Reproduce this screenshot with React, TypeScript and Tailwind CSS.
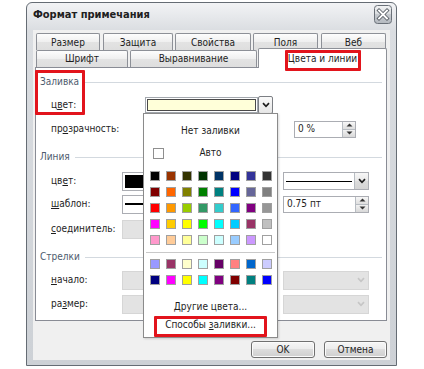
import React from "react";

const swatchesMain = [
  "bg-[#000000]", "bg-[#993300]", "bg-[#333300]", "bg-[#003300]", "bg-[#003366]", "bg-[#000080]", "bg-[#333399]", "bg-[#333333]",
  "bg-[#800000]", "bg-[#ff6600]", "bg-[#808000]", "bg-[#008000]", "bg-[#008080]", "bg-[#0000ff]", "bg-[#666699]", "bg-[#808080]",
  "bg-[#ff0000]", "bg-[#ff9900]", "bg-[#99cc00]", "bg-[#339966]", "bg-[#33cccc]", "bg-[#3366ff]", "bg-[#800080]", "bg-[#969696]",
  "bg-[#ff00ff]", "bg-[#ffcc00]", "bg-[#ffff00]", "bg-[#00ff00]", "bg-[#00ffff]", "bg-[#00ccff]", "bg-[#993366]", "bg-[#c0c0c0]",
  "bg-[#ff99cc]", "bg-[#ffcc99]", "bg-[#ffff99]", "bg-[#ccffcc]", "bg-[#ccffff]", "bg-[#99ccff]", "bg-[#cc99ff]", "bg-[#ffffff]",
];
const swatchesExtra = [
  "bg-[#9999ff]", "bg-[#993366]", "bg-[#ffffcc]", "bg-[#ccffff]", "bg-[#660066]", "bg-[#ff8080]", "bg-[#0066cc]", "bg-[#ccccff]",
  "bg-[#000080]", "bg-[#ff00ff]", "bg-[#ffff00]", "bg-[#00ffff]", "bg-[#800080]", "bg-[#800000]", "bg-[#008080]", "bg-[#0000ff]",
];

function Chevron({ disabled }: { disabled?: boolean }) {
  return (
    <svg width="8" height="6" viewBox="0 0 8 6">
      <path d="M1 1.2 L4 4.3 L7 1.2" fill="none" stroke={disabled ? "#c6c6c6" : "#1e1e1e"} strokeWidth="1.7" />
    </svg>
  );
}

function DropBtn({ disabled }: { disabled?: boolean }) {
  return (
    <div
      className={
        disabled
          ? "w-[14px] h-full flex items-center justify-center"
          : "w-[14px] h-full flex items-center justify-center border-l border-[#b7bcc2] bg-[linear-gradient(to_bottom,#f7f7f7,#e8e8e8_50%,#dcdcdc_50%,#d4d4d4)]"
      }
    >
      <Chevron disabled={disabled} />
    </div>
  );
}

function SpinBtns() {
  return (
    <div className="w-[13px] h-full flex flex-col border-l border-[#b7bcc2]">
      <div className="flex-1 flex items-center justify-center bg-[linear-gradient(to_bottom,#f7f7f7,#dedede)] border-b border-[#b7bcc2]">
        <svg width="7" height="4" viewBox="0 0 7 4"><path d="M0.5 3.5 L3.5 0.5 L6.5 3.5 Z" fill="#333" /></svg>
      </div>
      <div className="flex-1 flex items-center justify-center bg-[linear-gradient(to_bottom,#f2f2f2,#d8d8d8)]">
        <svg width="7" height="4" viewBox="0 0 7 4"><path d="M0.5 0.5 L3.5 3.5 L6.5 0.5 Z" fill="#333" /></svg>
      </div>
    </div>
  );
}

function GroupHeader({ title }: { title: string }) {
  return (
    <div className="flex items-center h-[14px] pl-[4px] pr-[4px]">
      <span className="text-[#4e5b6e]">{title}</span>
      <div className="flex-1 h-px bg-[#d3d9df] ml-[5px]" />
    </div>
  );
}

function Tab({ label, className }: { label: string; className: string }) {
  return (
    <div
      className={
        "h-full flex justify-center pt-[3px] border border-b-0 border-[#8d9097] rounded-t-[2px] bg-[linear-gradient(to_bottom,#fdfdfd,#efefef_50%,#e3e3e3_50%,#dedede)] " +
        className
      }
    >
      {label}
    </div>
  );
}

function Button({ label, className }: { label: string; className: string }) {
  return (
    <div
      className={
        "h-[17px] flex items-center justify-center border border-[#707070] rounded-[3px] bg-[linear-gradient(to_bottom,#f6f6f6,#ebebeb_50%,#dddddd_50%,#cfcfcf)] shadow-[inset_0_0_0_1px_#fbfbfb] " +
        className
      }
    >
      {label}
    </div>
  );
}

function CloseBtn() {
  return (
    <svg width="18" height="19" viewBox="0 0 18 19">
      <defs>
        <linearGradient id="cb" x1="0" y1="0" x2="0" y2="1">
          <stop offset="0" stopColor="#f3f4f5" />
          <stop offset="0.5" stopColor="#d9dcdf" />
          <stop offset="0.5" stopColor="#c6cacf" />
          <stop offset="1" stopColor="#b4b9bf" />
        </linearGradient>
      </defs>
      <rect x="0.5" y="0.5" width="17" height="18" rx="3" fill="url(#cb)" stroke="#6a7078" />
      <path d="M5 5.5 L13 13.5 M13 5.5 L5 13.5" stroke="#5b6168" strokeWidth="3.6" strokeLinecap="square" />
      <path d="M5 5.5 L13 13.5 M13 5.5 L5 13.5" stroke="#ffffff" strokeWidth="1.8" strokeLinecap="square" />
    </svg>
  );
}

function Popup() {
  return (
    <div className="absolute left-[143px] top-[113px] w-[135px] h-[225px] bg-white border border-[#8b8b8b] flex flex-col shadow-[1px_1px_2px_rgba(0,0,0,0.15)]">
      <div className="mt-[8px] h-[18px] flex items-center justify-center">Нет заливки</div>
      <div className="mt-[6px] h-[14px] grid grid-cols-[1fr_auto_1fr] items-center">
        <div className="ml-[9px] w-[11px] h-[11px] border border-[#8f8f8f] bg-white" />
        <span>Авто</span>
        <span />
      </div>
      <div className="mt-[11px] pl-[6px] grid grid-cols-[repeat(8,10px)] gap-[6px]">
        {swatchesMain.map((c, i) => (
          <div key={i} className={"w-[10px] h-[10px] border border-[#a0a0a0] " + c} />
        ))}
      </div>
      <div className="mt-[7px] mx-[2px] h-px bg-[#c9c9c9]" />
      <div className="mt-[6px] pl-[6px] grid grid-cols-[repeat(8,10px)] gap-[6px]">
        {swatchesExtra.map((c, i) => (
          <div key={i} className={"w-[10px] h-[10px] border border-[#a0a0a0] " + c} />
        ))}
      </div>
      <div className="mt-[14px] h-[16px] flex items-center justify-center">
        <span><u>Д</u>ругие цвета...</span>
      </div>
      <div className="mt-[2px] h-[16px] flex items-center justify-center">
        <span>Способы <u>з</u>аливки...</span>
      </div>
    </div>
  );
}

function Panel() {
  return (
    <div className="w-[352px] h-[254px] border border-[#898c95] bg-white flex flex-col pt-[7px]">
      <GroupHeader title="Заливка" />
      {/* fill color */}
      <div className="mt-[7px] h-[18px] flex items-center pl-[15px]">
        <span className="w-[94px]">ц<u>в</u>ет:</span>
        <div className="w-[128px] h-[17px] flex items-center">
          <div className="flex-1 h-[16px] border border-[#a3a8ae] bg-white p-[1px]">
            <div className="w-full h-full bg-[#ffffd9] border border-[#4a4a4a]" />
          </div>
          <div className="w-[15px] h-[18px] border border-[#7c7f84] rounded-[2px] flex items-center justify-center bg-[linear-gradient(to_bottom,#fafafa,#e6e6e6)]">
            <Chevron />
          </div>
        </div>
      </div>
      {/* transparency */}
      <div className="mt-[6px] h-[18px] flex items-center pl-[15px]">
        <span className="w-[243px]">пр<u>о</u>зрачность:</span>
        <div className="w-[62px] h-[17px] flex border border-[#abadb3] bg-white">
          <span className="flex-1 pl-[3px] flex items-center">0 %</span>
          <SpinBtns />
        </div>
      </div>
      <div className="mt-[12px]">
        <GroupHeader title="Линия" />
      </div>
      {/* line color */}
      <div className="mt-[8px] h-[18px] flex items-center pl-[15px]">
        <span className="w-[71px]">цв<u>е</u>т:</span>
        <div className="w-[122px] h-[19px] border border-[#abadb3] bg-white p-[2px]">
          <div className="w-full h-full bg-black" />
        </div>
        <div className="ml-[39px] w-[86px] h-[18px] flex border border-[#abadb3] bg-white">
          <div className="flex-1 flex items-center pl-[2px] pr-[2px]">
            <div className="w-full h-px bg-black" />
          </div>
          <DropBtn />
        </div>
      </div>
      {/* pattern */}
      <div className="mt-[5px] h-[18px] flex items-center pl-[15px]">
        <span className="w-[71px]"><u>ш</u>аблон:</span>
        <div className="w-[122px] h-[19px] border border-[#abadb3] bg-white flex items-center pl-[2px]">
          <div className="w-full h-[2px] bg-black" />
        </div>
        <div className="ml-[39px] w-[86px] h-[17px] flex border border-[#abadb3] bg-white">
          <span className="flex-1 pl-[3px] flex items-center">0.75 пт</span>
          <SpinBtns />
        </div>
      </div>
      {/* connector */}
      <div className="mt-[7px] h-[18px] flex items-center pl-[15px]">
        <span className="w-[71px]"><u>с</u>оединитель:</span>
        <div className="w-[122px] h-[19px] border border-[#d6d6d6] bg-[#e3e3e3]" />
      </div>
      <div className="mt-[12px]">
        <GroupHeader title="Стрелки" />
      </div>
      {/* begin */}
      <div className="mt-[7px] h-[18px] flex items-center pl-[15px]">
        <span className="w-[71px]"><u>н</u>ачало:</span>
        <div className="w-[122px] h-[19px] border border-[#d6d6d6] bg-[#e3e3e3]" />
        <div className="ml-[39px] w-[86px] h-[19px] flex justify-end border border-[#d6d6d6] bg-[#e3e3e3]">
          <DropBtn disabled />
        </div>
      </div>
      {/* size */}
      <div className="mt-[6px] h-[18px] flex items-center pl-[15px]">
        <span className="w-[71px]">ра<u>з</u>мер:</span>
        <div className="w-[122px] h-[19px] border border-[#d6d6d6] bg-[#e3e3e3]" />
        <div className="ml-[39px] w-[86px] h-[19px] flex justify-end border border-[#d6d6d6] bg-[#e3e3e3]">
          <DropBtn disabled />
        </div>
      </div>
    </div>
  );
}

function Dialog() {
  return (
    <div className="w-[371px] h-[364px] flex flex-col rounded-t-[6px] border border-[#656c74] bg-[linear-gradient(to_bottom,#f2f3f5,#dadde1_28px,#cdd1d6)]">
      <div className="h-[27px] flex items-start pl-[6px] pr-[4px]">
        <div className="h-[23px] flex items-center text-[11px] font-bold text-[#202020] [font-family:'DejaVu_Sans_Condensed','DejaVu_Sans',sans-serif]">
          Формат примечания
        </div>
        <div className="ml-auto mt-[2px]">
          <CloseBtn />
        </div>
      </div>
      <div className="flex-1 px-[6px] pb-[5px]">
        <div className="h-full bg-[#f0f0f0] flex flex-col pl-[2px] pr-[3px] pt-[3px]">
          <div className="w-[352px] h-[34px] flex flex-col">
            <div className="h-[17px] flex">
              <Tab label="Размер" className="ml-[1px] w-[64px]" />
              <Tab label="Защита" className="ml-[3px] w-[70px]" />
              <Tab label="Свойства" className="ml-[2px] w-[76px]" />
              <Tab label="Поля" className="ml-[2px] w-[65px]" />
              <Tab label="Веб" className="ml-[3px] w-[65px]" />
            </div>
            <div className="h-[17px] flex items-start">
              <Tab label="Шрифт" className="ml-[1px] w-[92px] !pt-[2px]" />
              <Tab label="Выравнивание" className="ml-[2px] w-[127px] !pt-[2px]" />
              <div className="relative z-10 -mt-[2px] ml-[1px] w-[129px] h-[20px] flex justify-center pt-[4px] border border-b-0 border-[#8d9097] rounded-t-[2px] bg-white">
                Цвета и линии
              </div>
            </div>
          </div>
          <Panel />
          <div className="mt-[20px] flex justify-end gap-[9px] pr-[0px]">
            <Button label="OK" className="w-[64px]" />
            <Button label="Отмена" className="w-[63px]" />
          </div>
        </div>
      </div>
    </div>
  );
}

export default function App() {
  return (
    <div className="relative w-[424px] h-[369px] bg-white overflow-hidden text-[10px] leading-[12px] text-[#1e1e1e] [font-family:'DejaVu_Sans_Condensed','DejaVu_Sans',sans-serif]">
      <div className="pl-[26px] pt-[2px]">
        <Dialog />
      </div>
      <Popup />
      <div className="absolute z-20 left-[35px] top-[70px] w-[50px] h-[45px] border-[3px] border-[#e2141c] rounded-[1px]" />
      <div className="absolute z-20 left-[285px] top-[50px] w-[76px] h-[21px] border-[3px] border-[#e2141c] rounded-[1px]" />
      <div className="absolute z-20 left-[154px] top-[316px] w-[113px] h-[21px] border-[3px] border-[#e2141c] rounded-[1px]" />
    </div>
  );
}
